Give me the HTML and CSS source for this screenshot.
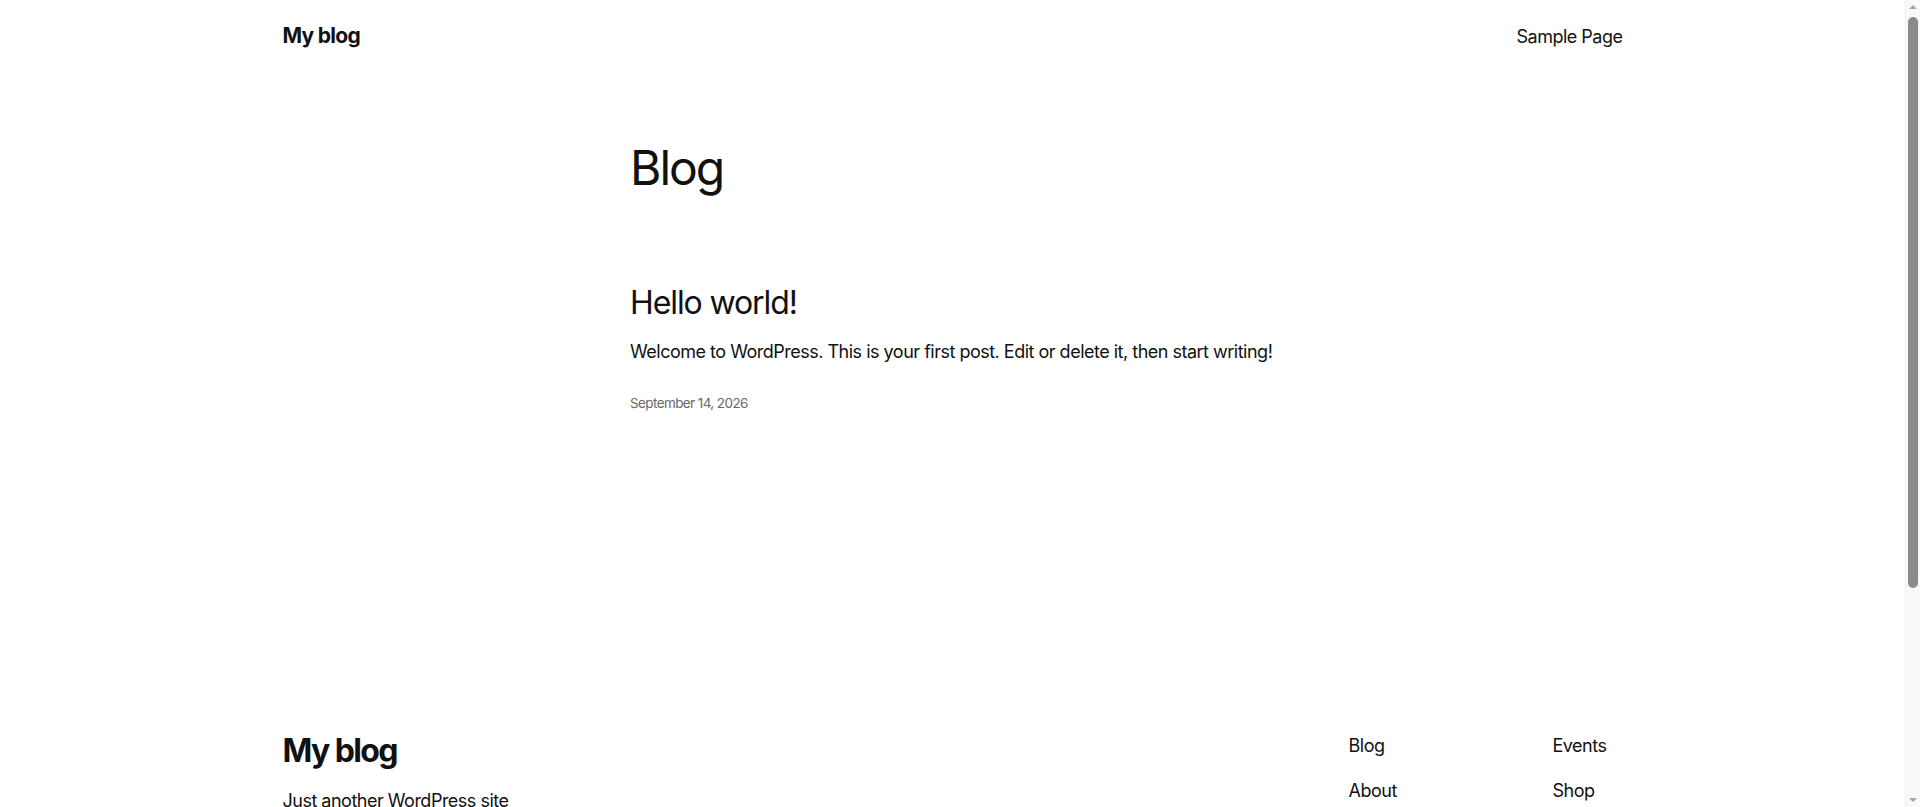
FILE: index.html
```html
<!DOCTYPE html>
<html lang="en">
<head>
<meta charset="utf-8">
<title>My blog</title>
<link rel="stylesheet" href="styles.css">
</head>
<body>
<header class="site-header">
  <a class="site-title" href="#">My blog</a>
  <nav class="header-nav"><a href="#">Sample Page</a></nav>
</header>
<main class="site-main">
  <h1 class="page-title">Blog</h1>
  <article class="post">
    <h2 class="post-title"><a href="#">Hello world!</a></h2>
    <p class="post-excerpt">Welcome to WordPress. This is your first post. Edit or delete it, then start writing!</p>
    <time class="post-date">September 14, 2026</time>
  </article>
</main>
<footer class="site-footer">
  <div class="footer-top">
    <div class="footer-brand">
      <a class="footer-title" href="#">My blog</a>
      <p class="tagline">Just another WordPress site</p>
    </div>
    <div class="footer-navs">
      <ul class="footer-nav">
        <li><a href="#">Blog</a></li>
        <li><a href="#">About</a></li>
        <li><a href="#">FAQs</a></li>
        <li><a href="#">Authors</a></li>
      </ul>
      <ul class="footer-nav">
        <li><a href="#">Events</a></li>
        <li><a href="#">Shop</a></li>
        <li><a href="#">Patterns</a></li>
        <li><a href="#">Themes</a></li>
      </ul>
    </div>
  </div>
  <hr class="footer-sep">
  <div class="footer-bottom">
    <span>Twenty Twenty-Five</span>
    <span>Designed with <a href="#">WordPress</a></span>
  </div>
</footer>
<div class="scrollbar" aria-hidden="true">
  <span class="sb-arrow sb-up"></span>
  <span class="sb-thumb"></span>
  <span class="sb-arrow sb-down"></span>
</div>
</body>
</html>
```
FILE: styles.css
```css
* { box-sizing: border-box; }
html, body { margin: 0; padding: 0; }
body {
  background: #ffffff;
  color: #111111;
  font-family: Inter, "Noto Sans", sans-serif;
  font-size: 18px;
  line-height: 1.4;
  letter-spacing: -0.5px;
  padding-right: 15px;
}
a { color: inherit; text-decoration: none; }

.site-header {
  width: 1340px;
  margin: 0 auto;
  padding-top: 21px;
  display: flex;
  justify-content: space-between;
  align-items: baseline;
}
.site-title {
  font-size: 21px;
  font-weight: 700;
  line-height: 1.4;
  letter-spacing: -0.7px;
}
.header-nav { font-size: 18px; }

.site-main {
  width: 645px;
  margin: 91px auto 0;
}
.page-title {
  margin: 0;
  font-size: 48px;
  font-weight: 400;
  line-height: 1.125;
  letter-spacing: -2px;
}
.post { margin-top: 90px; }
.post-title {
  margin: 0;
  font-size: 32px;
  font-weight: 400;
  line-height: 1.125;
  letter-spacing: -1.1px;
}
.post-excerpt {
  margin: 18px 0 0;
  white-space: nowrap;
}
.post-date {
  display: block;
  margin-top: 29px;
  font-size: 13.5px;
  line-height: 1.45;
  color: #686868;
  letter-spacing: -0.6px;
}

.site-footer {
  width: 1340px;
  margin: 320px auto 0;
  padding-bottom: 75px;
}
.footer-top {
  display: flex;
  justify-content: space-between;
  align-items: flex-start;
}
.footer-title {
  display: block;
  font-size: 32px;
  font-weight: 700;
  line-height: 1.125;
  letter-spacing: -1.6px;
}
.tagline { margin: 19px 0 0; }
.footer-navs {
  width: 274px;
  display: grid;
  grid-template-columns: 204px 1fr;
}
.footer-nav {
  list-style: none;
  margin: 0;
  padding: 0;
  display: flex;
  flex-direction: column;
  gap: 20px;
}
.footer-sep {
  margin: 80px 0 0;
  border: 0;
  border-top: 1px solid #e0e0e0;
}
.footer-bottom {
  margin-top: 30px;
  display: flex;
  justify-content: space-between;
  font-size: 14px;
}
.footer-bottom a { text-decoration: underline; }

.scrollbar {
  position: fixed;
  top: 0;
  right: 0;
  width: 15px;
  height: 100vh;
  background: #f9f9f9;
  border-left: 1px solid #f0f0f0;
}
.sb-thumb {
  position: absolute;
  top: 17px;
  left: 2px;
  width: 10px;
  height: 571px;
  border-radius: 5px;
  background: #8b8b8b;
}
.sb-arrow {
  position: absolute;
  left: 3px;
  width: 0;
  height: 0;
  border-left: 4px solid transparent;
  border-right: 4px solid transparent;
}
.sb-up {
  top: 5px;
  border-bottom: 4px solid #a3a3a3;
}
.sb-down {
  bottom: 5px;
  border-top: 4px solid #a3a3a3;
}
```
